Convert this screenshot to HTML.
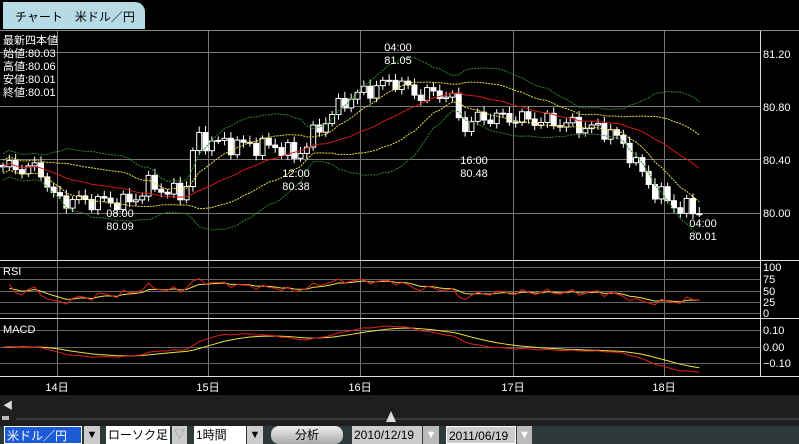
<!DOCTYPE html>
<html><head><meta charset="utf-8"><style>
*{margin:0;padding:0;box-sizing:border-box}
body{width:799px;height:444px;overflow:hidden;background:#000;font-family:"Liberation Sans","Noto Sans CJK JP",sans-serif;position:relative}
.tab{position:absolute;left:3px;top:2px;width:142px;height:27px;background:#b6dbe4;border-radius:0 10px 0 0;font-size:12px;color:#000;padding:6px 0 0 12px;white-space:nowrap}
.ab{position:absolute;font-size:11px;color:#fff}
.tb{position:absolute;top:426px;height:18px;font-size:12px;line-height:18px;white-space:nowrap;overflow:hidden}
</style></head><body>
<div class="tab">チャート　米ドル／円</div>
<svg id="s" width="799" height="444" style="position:absolute;left:0;top:0"></svg>
<div class="ab" style="left:3px;top:35px;line-height:13px">最新四本値<br>始値:80.03<br>高値:80.06<br>安値:80.01<br>終値:80.01</div>
<div style="position:absolute;left:0;top:395px;width:799px;height:31px;background:#1e1e1e"></div>
<div style="position:absolute;left:3px;top:397px;color:#ddd;font-size:10px">◀</div>
<div style="position:absolute;left:2px;top:416px;width:7px;height:4px;background:#bbb"></div>
<div style="position:absolute;left:16px;top:418px;width:783px;height:2px;background:#3a3a3a"></div>
<div style="position:absolute;left:386px;top:411px;width:0;height:0;border-left:5px solid transparent;border-right:5px solid transparent;border-bottom:11px solid #ddd"></div>
<div style="position:absolute;left:0;top:426px;width:799px;height:18px;background:#2e3a3a"></div>
<div class="tb" style="left:4px;width:78px;background:#1d5ad6;color:#fff;padding-left:2px;border:1px solid #fff">米ドル／円</div>
<div class="tb" style="left:84px;width:16px;background:#ccc;color:#000;text-align:center;font-size:11px">▼</div>
<div class="tb" style="left:106px;width:64px;background:#fff;color:#000;padding-left:2px">ローソク足</div>
<div class="tb" style="left:172px;width:15px;background:#ccc;color:#888;text-align:center;font-size:11px">▽</div>
<div class="tb" style="left:194px;width:52px;background:#fff;color:#000;padding-left:2px">1時間</div>
<div class="tb" style="left:247px;width:16px;background:#ccc;color:#000;text-align:center;font-size:11px">▼</div>
<div class="tb" style="left:271px;width:72px;background:linear-gradient(#eee,#aaa);color:#000;text-align:center;border-radius:8px">分析</div>
<div class="tb" style="left:352px;width:70px;background:#ccc;color:#000;padding-left:2px">2010/12/19</div>
<div class="tb" style="left:423px;width:16px;background:#bbb;color:#fff;text-align:center;font-size:11px">▼</div>
<div class="tb" style="left:446px;width:70px;background:#ccc;color:#000;padding-left:2px;border:1px solid #fff">2011/06/19</div>
<div class="tb" style="left:517px;width:15px;background:#bbb;color:#fff;text-align:center;font-size:11px">▼</div>
<script>
var s=document.getElementById('s'),h='';
function L(x1,y1,x2,y2,c,w,d){h+='<line x1="'+x1+'" y1="'+y1+'" x2="'+x2+'" y2="'+y2+'" stroke="'+c+'" stroke-width="'+(w||1)+'"'+(d?' stroke-dasharray="'+d+'"':'')+'/>';}
function T(x,y,t,a){h+='<text x="'+x+'" y="'+y+'" fill="#fff" font-size="11" font-family="Liberation Sans,Noto Sans CJK JP,sans-serif"'+(a?' text-anchor="'+a+'"':'')+'>'+t+'</text>';}
function P(pts,c,d){h+='<polyline fill="none" stroke="'+c+'" stroke-width="1"'+(d?' stroke-dasharray="'+d+'"':'')+' points="'+pts.join(' ')+'"/>';}
L(0,30.5,799,30.5,'#888');
[52,106,159,213].forEach(function(y){L(0,y+.5,760,y+.5,'#777')});
[57,208,360,513,664].forEach(function(x){L(x+.5,31,x+.5,376,'#777')});
[267,279,291,302,313,330,347,363].forEach(function(y){L(0,y+.5,760,y+.5,'#666')});
L(0,260.5,799,260.5,'#ddd');L(0,318.5,799,318.5,'#ddd');L(0,376.5,799,376.5,'#ddd');
L(760.5,31,760.5,376,'#ddd');
[['81.20',58],['80.80',111],['80.40',164],['80.00',217]].forEach(function(a){T(763,a[1],a[0])});
[['100',271],['75',283],['50',295],['25',306],['0',317]].forEach(function(a){T(763,a[1],a[0])});
[['0.10',334],['0.00',351],['−0.10',367]].forEach(function(a){T(763,a[1],a[0])});
[['14日',57],['15日',208],['16日',360],['17日',513],['18日',664]].forEach(function(a){T(a[1],391,a[0],'middle')});
h+='<text x="3" y="275" fill="#fff" font-size="11">RSI</text><text x="3" y="333" fill="#fff" font-size="11">MACD</text>';
var wp=[[0,80.35],[40,80.33],[55,80.1],[130,80.08],[150,80.22],[170,80.15],[185,80.15],[195,80.55],[230,80.52],[280,80.5],[295,80.42],[320,80.65],[345,80.85],[375,80.95],[395,81.0],[415,80.9],[450,80.9],[462,80.65],[480,80.72],[510,80.72],[560,80.68],[610,80.62],[630,80.45],[650,80.2],[675,80.05],[700,80.01]];
function ip(x){for(var i=1;i<wp.length;i++){if(x<=wp[i][0]){var a=wp[i-1],b=wp[i];return a[1]+(b[1]-a[1])*(x-a[0])/(b[0]-a[0]);}}return 80.01;}
function Y(p){return 213-(p-80)*132.5;}
var C=[],X=[],prev=80.36;
for(var i=0;i<111;i++){var x=3+i*6.33;X.push(x);var c=ip(x)+0.05*Math.sin(i*1.7)+0.03*Math.sin(i*3.1);C.push(c);
var o=prev,hi=Math.max(o,c)+0.02+0.03*Math.abs(Math.sin(i*2.3)),lo=Math.min(o,c)-0.02-0.02*Math.abs(Math.cos(i*1.9));
L(x,Y(hi),x,Y(lo),'#fff');var t=Y(Math.max(o,c)),b=Y(Math.min(o,c));if(b-t<1)b=t+1;
h+='<rect x="'+(x-2.5)+'" y="'+t+'" width="5" height="'+(b-t)+'" fill="'+(c>=o?'#000':'#fff')+'" stroke="#fff" stroke-width="1"/>';prev=c;}
var m=[],u1=[],d1=[],u2=[],d2=[];
for(var i=0;i<C.length;i++){var n=Math.min(20,i+1),sm=0,sq=0;for(var k=i-n+1;k<=i;k++)sm+=C[k];var mu=sm/n;for(k=i-n+1;k<=i;k++)sq+=(C[k]-mu)*(C[k]-mu);var sd=Math.max(Math.sqrt(sq/n),0.05);
m.push(X[i]+','+Y(mu));u1.push(X[i]+','+Y(mu+sd));d1.push(X[i]+','+Y(mu-sd));u2.push(X[i]+','+Y(mu+2*sd));d2.push(X[i]+','+Y(mu-2*sd));}
P(m,'#d01818');P(u1,'#e8e040','2,1');P(d1,'#e8e040','2,1');P(u2,'#2a8a2a','2,1');P(d2,'#2a8a2a','2,1');
var r1=[],r2=[],g=0.01,l=0.01,rs=50;
for(var i=1;i<C.length;i++){var d=C[i]-C[i-1];g=g*0.88+Math.max(d,0)*0.12;l=l*0.88+Math.max(-d,0)*0.12;var r=100*g/(g+l);r=Math.min(92,Math.max(8,r));rs=rs*0.7+r*0.3;
r1.push(X[i]+','+(313-r*0.46));r2.push(X[i]+','+(313-rs*0.46));}
P(r2,'#e8e040');P(r1,'#e02020');
var e1=C[0],e2=C[0],sg=0,M1=[],M2=[];
for(var i=0;i<C.length;i++){e1+=(C[i]-e1)*2/13;e2+=(C[i]-e2)*2/27;var mc=e1-e2;sg+=(mc-sg)*2/10;M1.push(X[i]+','+(347-mc*140));M2.push(X[i]+','+(347-sg*140));}
P(M2,'#e8e040');P(M1,'#e02020');
T(120,217,'08:00','middle');T(120,230,'80.09','middle');
T(296,177,'12:00','middle');T(296,190,'80.38','middle');
T(398,51,'04:00','middle');T(398,64,'81.05','middle');
T(474,164,'16:00','middle');T(474,177,'80.48','middle');
T(703,227,'04:00','middle');T(703,240,'80.01','middle');
s.innerHTML=h;
</script>
</body></html>
